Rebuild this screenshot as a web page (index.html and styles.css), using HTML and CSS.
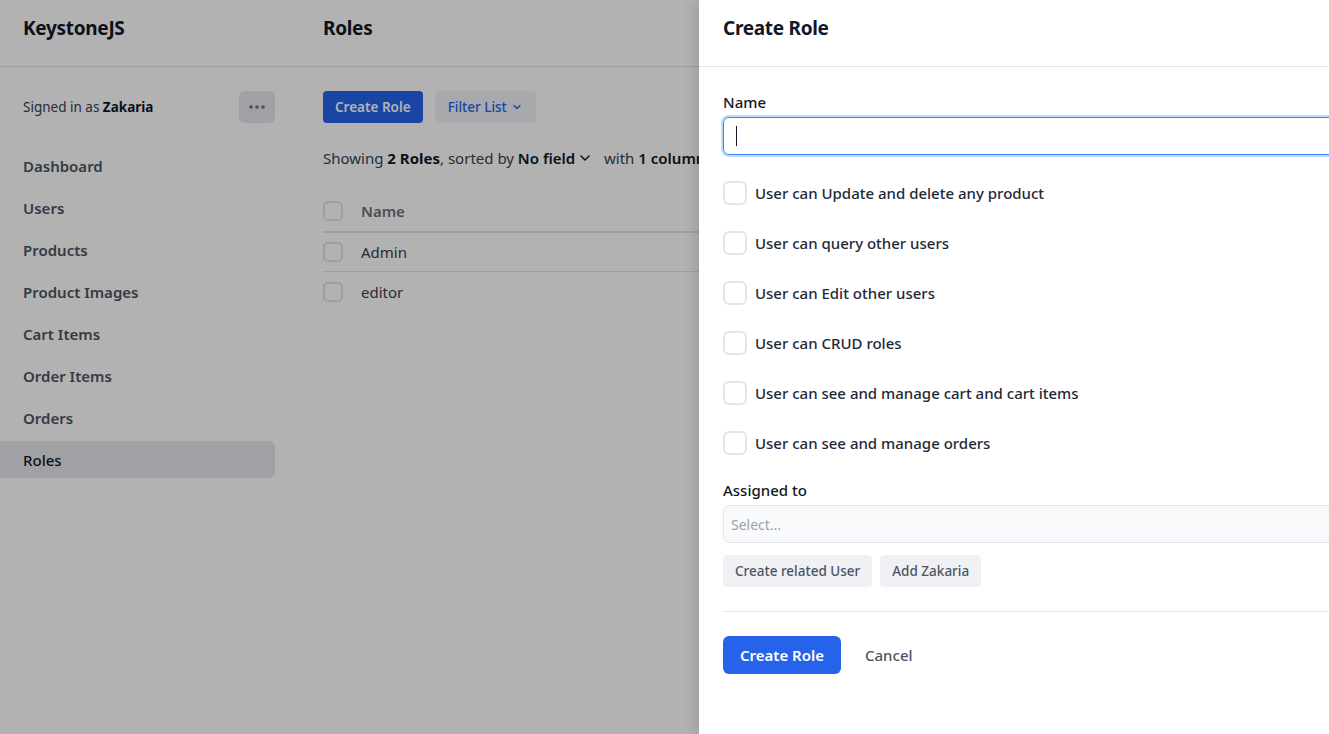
FILE: index.html
```html
<!DOCTYPE html>
<html lang="en">
<head>
<meta charset="utf-8">
<title>Roles - KeystoneJS</title>
<link rel="stylesheet" href="styles.css">
</head>
<body>
<div class="app">
  <header class="topbar">
    <div class="brand">KeystoneJS</div>
    <div class="page-title">Roles</div>
  </header>
  <div class="body">
    <aside class="sidebar">
      <div class="signed">
        <span>Signed in as <strong>Zakaria</strong></span>
        <button class="dots" aria-label="menu">
          <svg width="16" height="4" viewBox="0 0 16 4"><circle cx="2" cy="2" r="1.8" fill="#6b7280"/><circle cx="8" cy="2" r="1.8" fill="#6b7280"/><circle cx="14" cy="2" r="1.8" fill="#6b7280"/></svg>
        </button>
      </div>
      <nav class="nav">
        <a class="nav-item">Dashboard</a>
        <a class="nav-item">Users</a>
        <a class="nav-item">Products</a>
        <a class="nav-item">Product Images</a>
        <a class="nav-item">Cart Items</a>
        <a class="nav-item">Order Items</a>
        <a class="nav-item">Orders</a>
        <a class="nav-item active">Roles</a>
      </nav>
    </aside>
    <main class="main">
      <div class="actions">
        <button class="btn-primary-sm">Create Role</button>
        <button class="btn-filter">Filter List
          <svg width="12" height="12" viewBox="0 0 12 12"><path d="M3 4.5l3 3 3-3" fill="none" stroke="#2563eb" stroke-width="1.4" stroke-linecap="round" stroke-linejoin="round"/></svg>
        </button>
      </div>
      <p class="summary">Showing <strong>2 Roles</strong>, sorted by <span class="sortby">No field
        <svg width="14" height="14" viewBox="0 0 14 14"><path d="M3 5l4 4 4-4" fill="none" stroke="#111827" stroke-width="1.5" stroke-linecap="round" stroke-linejoin="round"/></svg></span> with <span class="sortby">1 column</span></p>
      <div class="table">
        <div class="trow thead"><span class="cb"></span><span>Name</span></div>
        <div class="trow"><span class="cb"></span><span>Admin</span></div>
        <div class="trow last"><span class="cb"></span><span>editor</span></div>
      </div>
    </main>
  </div>
</div>
<div class="overlay"></div>
<section class="drawer">
  <div class="drawer-inner">
    <header class="drawer-head">Create Role</header>
    <div class="form">
      <label class="field-label">Name</label>
      <div class="input focused"><span class="caret"></span></div>
      <div class="checks">
        <label class="check"><span class="cb lg"></span>User can Update and delete any product</label>
        <label class="check"><span class="cb lg"></span>User can query other users</label>
        <label class="check"><span class="cb lg"></span>User can Edit other users</label>
        <label class="check"><span class="cb lg"></span>User can CRUD roles</label>
        <label class="check"><span class="cb lg"></span>User can see and manage cart and cart items</label>
        <label class="check"><span class="cb lg"></span>User can see and manage orders</label>
      </div>
      <label class="field-label assigned">Assigned to</label>
      <div class="select">Select...</div>
      <div class="rel-btns">
        <button class="btn-soft">Create related User</button>
        <button class="btn-soft">Add Zakaria</button>
      </div>
    </div>
    <footer class="drawer-foot">
      <button class="btn-primary">Create Role</button>
      <button class="btn-link">Cancel</button>
    </footer>
  </div>
</section>
</body>
</html>
```

FILE: styles.css
```css
* { box-sizing: border-box; }
html, body { margin: 0; padding: 0; }
body {
  font-family: "Noto Sans", "Open Sans", sans-serif;
  color: #111827;
  background: #fff;
  width: 1329px;
  height: 734px;
  overflow: hidden;
  position: relative;
}
button { font-family: inherit; border: 0; cursor: pointer; }

.app { display: flex; flex-direction: column; height: 734px; }
.topbar {
  height: 67px;
  border-bottom: 1px solid #e1e5e9;
  display: flex;
  align-items: flex-start;
  padding-top: 15px;
  line-height: 26px;
  flex: none;
}
.brand {
  width: 323px;
  padding-left: 23px;
  font-size: 19px;
  font-weight: 700;
  letter-spacing: -0.3px;
}
.page-title { font-size: 19px; font-weight: 700; letter-spacing: -0.3px; }

.body { display: flex; flex: 1; }
.sidebar { width: 275px; flex: none; padding-top: 24px; }
.signed {
  display: flex;
  align-items: center;
  justify-content: space-between;
  padding-left: 23px;
  font-size: 13.5px;
  color: #374151;
  height: 32px;
}
.signed strong { color: #111827; font-weight: 700; }
.dots {
  width: 36px; height: 32px;
  background: #e5e7eb;
  border-radius: 6px;
  display: flex; align-items: center; justify-content: center;
  padding: 0;
}
.nav { display: flex; flex-direction: column; margin-top: 24px; }
.nav-item {
  height: 37px;
  display: flex;
  align-items: center;
  padding-left: 23px;
  margin-bottom: 5px;
  font-size: 15px;
  font-weight: 600;
  color: #4b5563;
  border-radius: 0 6px 6px 0;
}
.nav-item.active { background: #e5e7eb; color: #111827; font-weight: 500; }

.main { padding-left: 48px; padding-top: 24px; flex: 1; }
.actions { display: flex; gap: 12px; }
.btn-primary-sm {
  height: 32px;
  padding: 0 12px;
  background: #2563eb;
  color: #fff;
  font-size: 13.5px;
  font-weight: 600;
  border-radius: 4px;
}
.btn-filter {
  height: 32px;
  padding: 0 13px;
  background: #eff3f8;
  color: #2563eb;
  font-size: 13.5px;
  font-weight: 500;
  border-radius: 4px;
  display: flex; align-items: center; gap: 4px;
}
.summary { margin: 23px 0 0; font-size: 15px; color: #374151; line-height: 24px; }
.summary strong { font-weight: 700; color: #111827; }
.sortby { color: #111827; font-weight: 600; display: inline-flex; align-items: center; gap: 3px; }
.sortby svg { margin-right: 8px; }

.table { margin-top: 22px; width: 420px; }
.trow {
  display: flex;
  align-items: center;
  gap: 18px;
  height: 39px;
  border-bottom: 1px solid #e1e5e9;
  font-size: 15px;
  color: #374151;
}
.trow.thead { height: 41px; border-bottom: 2px solid #e1e5e9; font-weight: 600; color: #6b7280; padding-bottom: 2px; }
.trow.last { border-bottom: 0; }
.cb {
  width: 20px; height: 20px;
  border: 2px solid #e1e5e9;
  border-radius: 5px;
  background: #fff;
  flex: none;
}

.overlay {
  position: absolute;
  inset: 0;
  background: rgba(0, 0, 0, 0.3);
}

.drawer {
  position: absolute;
  top: 0; left: 699px;
  width: 630px;
  height: 734px;
  background: #fff;
  overflow: hidden;
  box-shadow: -4px 0 12px rgba(0,0,0,0.12);
}
.drawer-inner { width: 660px; }
.drawer-head {
  height: 67px;
  border-bottom: 1px solid #e1e5e9;
  display: flex;
  align-items: flex-start;
  padding-top: 15px;
  line-height: 26px;
  padding-left: 24px;
  font-size: 19px;
  font-weight: 700;
  letter-spacing: -0.3px;
}
.form { padding: 24px 24px 0; display: flex; flex-direction: column; }
.field-label { font-size: 15px; font-weight: 500; color: #111827; line-height: 22px; margin-bottom: 4px; }
.input {
  height: 38px;
  border: 1px solid #3b82f6;
  border-radius: 6px;
  box-shadow: 0 0 0 2px #bfdbfe;
  display: flex; align-items: center;
  padding-left: 12px;
}
.caret { width: 1px; height: 20px; background: #111827; }
.checks { display: flex; flex-direction: column; gap: 26px; margin-top: 26px; }
.check {
  display: flex; align-items: center; gap: 8px;
  font-size: 15px; font-weight: 500; color: #1f2937;
  height: 24px;
}
.cb.lg { width: 24px; height: 24px; border-radius: 6px; }
.assigned { margin-top: 24px; }
.select {
  height: 38px;
  background: #f9fafb;
  border: 1px solid #e1e5e9;
  border-radius: 6px;
  display: flex; align-items: center;
  padding-left: 7px;
  font-size: 14px;
  color: #9ca3af;
}
.rel-btns { display: flex; gap: 8px; margin-top: 12px; }
.btn-soft {
  height: 32px;
  padding: 0 12px;
  background: #eff1f4;
  color: #4b5563;
  font-size: 13.5px;
  font-weight: 500;
  border-radius: 4px;
}
.drawer-foot {
  margin: 24px 24px 0;
  border-top: 1px solid #e1e5e9;
  padding-top: 24px;
  display: flex; align-items: center; gap: 8px;
}
.btn-primary {
  height: 38px;
  padding: 0 17px;
  background: #2563eb;
  color: #fff;
  font-size: 15px;
  font-weight: 600;
  border-radius: 6px;
}
.btn-link {
  background: none;
  color: #4b5563;
  font-size: 15px;
  font-weight: 500;
  padding: 0 16px;
  height: 38px;
}
```
